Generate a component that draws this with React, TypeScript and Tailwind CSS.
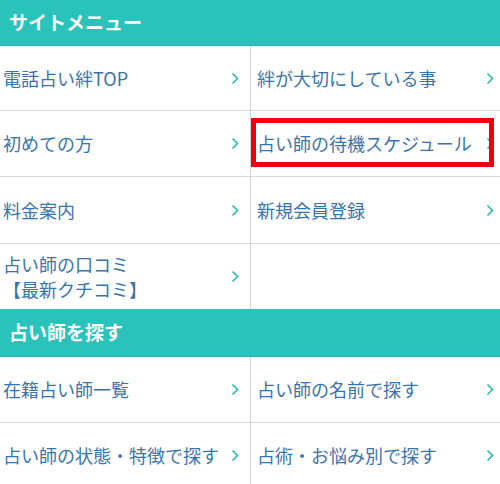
import React from "react";

type Item = {
  label: React.ReactNode;
  highlight?: boolean;
};

const Chevron = () => (
  <svg width="8" height="13" viewBox="0 0 8 13" className="shrink-0">
    <polyline
      points="1.5,1.5 6.5,6.5 1.5,11.5"
      fill="none"
      stroke="#2bb8b4"
      strokeWidth="1.6"
    />
  </svg>
);

const Header = ({ title, h }: { title: string; h: string }) => (
  <div
    className={`flex items-center bg-[#2ac3bc] pl-[9px] text-[19px] font-bold text-white border-b border-[#24b5ae] ${h}`}
  >
    {title}
  </div>
);

const Cell = ({ item, side }: { item?: Item; side: "left" | "right" }) => {
  if (!item) return <div className="border-l border-[#d6d6d6]" />;
  return (
    <div
      className={
        side === "left"
          ? "relative flex items-center justify-between pl-[3px] pr-[11px]"
          : "relative flex items-center justify-between border-l border-[#d6d6d6] pl-[6px] pr-[6px]"
      }
    >
      <span className="text-[18px] leading-[25px] text-[#3a74ae]">{item.label}</span>
      <Chevron />
      {item.highlight && (
        <div className="absolute left-0 right-[6px] top-[7px] bottom-[9px] border-[5px] border-[#f0000a]" />
      )}
    </div>
  );
};

const Row = ({ l, r, h }: { l: Item; r?: Item; h: string }) => (
  <div className={`grid grid-cols-[250px_1fr] border-b border-[#d6d6d6] ${h}`}>
    <Cell item={l} side="left" />
    <Cell item={r} side="right" />
  </div>
);

export default function App() {
  return (
    <div
      className="w-[500px] h-[484px] overflow-hidden bg-white"
      style={{ fontFamily: '"Noto Sans CJK JP", "Noto Sans", sans-serif' }}
    >
      <Header title="サイトメニュー" h="h-[46px]" />
      <Row h="h-[65px]" l={{ label: "電話占い絆TOP" }} r={{ label: "絆が大切にしている事" }} />
      <Row
        h="h-[66px]"
        l={{ label: "初めての方" }}
        r={{ label: "占い師の待機スケジュール", highlight: true }}
      />
      <Row h="h-[67px]" l={{ label: "料金案内" }} r={{ label: "新規会員登録" }} />
      <div className="grid grid-cols-[250px_1fr] h-[65px]">
        <Cell
          side="left"
          item={{
            label: (
              <>
                占い師の口コミ
                <br />
                【最新クチコミ】
              </>
            ),
          }}
        />
        <Cell side="right" />
      </div>
      <Header title="占い師を探す" h="h-[48px]" />
      <Row h="h-[66px]" l={{ label: "在籍占い師一覧" }} r={{ label: "占い師の名前で探す" }} />
      <Row
        h="h-[66px]"
        l={{ label: "占い師の状態・特徴で探す" }}
        r={{ label: "占術・お悩み別で探す" }}
      />
    </div>
  );
}
